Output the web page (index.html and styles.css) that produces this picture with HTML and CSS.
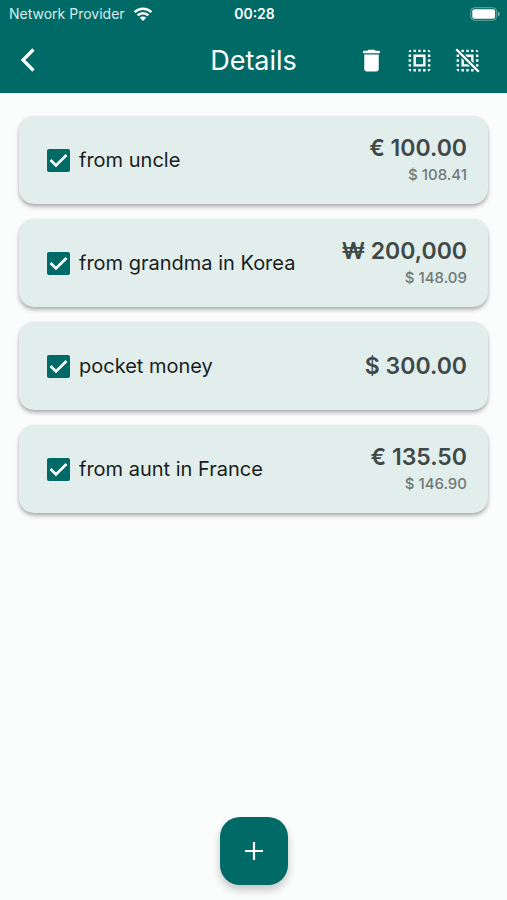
FILE: index.html
```html
<!DOCTYPE html>
<html lang="en">
<head>
<meta charset="utf-8">
<meta name="viewport" content="width=device-width, initial-scale=1">
<title>Details</title>
<link rel="stylesheet" href="styles.css">
</head>
<body>
<header class="top">
  <div class="status">
    <span class="carrier">Network Provider
      <svg class="wifi" viewBox="0 0 20 16" aria-hidden="true"><path d="M1.6 6.2a12 12 0 0 1 16.8 0M4.6 9.4a7.7 7.7 0 0 1 10.8 0" fill="none" stroke="currentColor" stroke-width="2.5"/><path d="M6.8 11.7a4.6 4.6 0 0 1 6.4 0L10 15z" fill="currentColor"/></svg>
    </span>
    <span class="clock">00:28</span>
    <svg class="battery" viewBox="0 0 30 14" aria-hidden="true"><rect x=".7" y=".7" width="26" height="12.6" rx="4" fill="none" stroke="#fff" stroke-opacity=".4"/><rect x="2.3" y="2.3" width="22.8" height="9.4" rx="2" fill="#fff"/><path d="M28 4.6c2.2.9 2.2 3.9 0 4.8z" fill="#fff" fill-opacity=".5"/></svg>
  </div>
  <div class="bar">
    <button class="icon-button back" aria-label="Back"><svg class="back-icon" viewBox="0 0 16 26"><path d="M13.5 2.5 3 13l10.500 10.500" fill="none" stroke="currentColor" stroke-width="3.200"/></svg></button>
    <h1 class="title">Details</h1>
    <div class="actions">
      <button class="icon-button" aria-label="Delete"><svg class="icon" viewBox="0 0 24 24"><path d="M6 19c0 1.100.9 2 2 2h8c1.100 0 2-.9 2-2V7H6v12zM18.500 4h-3l-.71-.71c-.18-.18-.44-.29-.7-.29H9.910c-.26 0-.52.110-.7.290L8.500 4h-3c-.3 0-.5.200-.5.500V6h14V4.500c0-.3-.2-.5-.5-.5z"/></svg></button>
      <button class="icon-button" aria-label="Select all"><svg class="icon" viewBox="0 0 24 24"><path d="M3 5h2V3c-1.100 0-2 .9-2 2zm0 8h2v-2H3v2zm4 8h2v-2H7v2zM3 9h2V7H3v2zm10-6h-2v2h2V3zm6 0v2h2c0-1.100-.9-2-2-2zM5 21v-2H3c0 1.100.9 2 2 2zm-2-4h2v-2H3v2zM9 3H7v2h2V3zm2 18h2v-2h-2v2zm8-8h2v-2h-2v2zm0 8c1.100 0 2-.9 2-2h-2v2zm0-12h2V7h-2v2zm0 8h2v-2h-2v2zm-4 4h2v-2h-2v2zm0-16h2V3h-2v2zM7 17h10V7H7v10zm2-8h6v6H9V9z"/></svg></button>
      <button class="icon-button" aria-label="Deselect all"><svg class="icon" viewBox="0 0 24 24"><path d="M3 13h2v-2H3zM7 21h2v-2H7zM3 9h2V7H3zM11 5h2V3h-2zM19 3v2h2c0-1.100-.9-2-2-2zM5 21v-2H3c0 1.100.9 2 2 2zM3 17h2v-2H3zM7 3h2v2H7zM11 21h2v-2h-2zM19 13h2v-2h-2zM19 9h2V7h-2zM19 15h2v2h-2zM15 21h2v-2h-2zM15 5h2V3h-2zM9.830 7H17v7.170l-2-2V9h-3.170zM7 9.830V17h7.170l-2-2H9v-3.170zM3.410 2 2 3.410 20.590 22 22 20.590z"/></svg></button>
    </div>
  </div>
</header>
<main class="content">
  <ul class="list">
    <li class="card">
      <label class="entry"><input class="check" type="checkbox" checked><span>from uncle</span></label>
      <div class="amounts"><strong class="amount">€ 100.00</strong><span class="converted">$ 108.41</span></div>
    </li>
    <li class="card">
      <label class="entry"><input class="check" type="checkbox" checked><span>from grandma in Korea</span></label>
      <div class="amounts"><strong class="amount">₩ 200,000</strong><span class="converted">$ 148.09</span></div>
    </li>
    <li class="card">
      <label class="entry"><input class="check" type="checkbox" checked><span>pocket money</span></label>
      <div class="amounts"><strong class="amount">$ 300.00</strong></div>
    </li>
    <li class="card">
      <label class="entry"><input class="check" type="checkbox" checked><span>from aunt in France</span></label>
      <div class="amounts"><strong class="amount">€ 135.50</strong><span class="converted">$ 146.90</span></div>
    </li>
  </ul>
</main>
<footer class="footer">
  <button class="add" aria-label="Add entry"><svg class="plus" viewBox="0 0 18 18"><path d="M9 0v18M0 9h18" stroke="currentColor" stroke-width="2.200"/></svg></button>
</footer>
</body>
</html>
```

FILE: styles.css
```css
* { box-sizing: border-box; }

body {
  margin: 0;
  min-height: 100vh;
  display: flex;
  flex-direction: column;
  background: #fbfdfc;
  color: #191c1c;
  font-family: Inter, "Noto Sans", sans-serif;
}

button {
  padding: 0;
  border: 0;
  background: none;
  color: inherit;
  font: inherit;
}

svg { display: block; }

.top {
  background: #006a67;
  color: #fff;
}

.status {
  display: grid;
  grid-template-columns: 1fr auto 1fr;
  align-items: center;
  height: 27px;
  padding: 0 7px 0 9px;
  font-size: 14px;
}

.carrier {
  display: flex;
  align-items: center;
  gap: 8px;
  color: #dcebea;
  white-space: nowrap;
}

.wifi { width: 20px; height: 16px; color: #fff; }
.clock { font-weight: 600; }
.battery { width: 30px; height: 14px; justify-self: end; }

.bar {
  display: grid;
  grid-template-columns: 1fr auto 1fr;
  align-items: center;
  height: 66px;
  padding: 0 16px;
}

.icon-button {
  display: grid;
  place-items: center;
  width: 48px;
  height: 48px;
}

.back { margin-left: -12px; }
.back-icon { width: 16px; height: 26px; }
.icon { width: 29px; height: 29px; fill: currentColor; }

.title {
  margin: 0;
  font-size: 27px;
  font-weight: 400;
}

.actions {
  display: flex;
  justify-content: flex-end;
}

.content {
  flex: 1;
  padding: 23px 19px;
}

.list {
  display: grid;
  gap: 15px;
  margin: 0;
  padding: 0;
  list-style: none;
}

.card {
  display: flex;
  align-items: center;
  justify-content: space-between;
  min-height: 88px;
  padding: 12px 21px 12px 28px;
  border-radius: 15px;
  background: #e2eeec;
  box-shadow: 0 3px 4px rgba(0, 0, 0, .26), 0 1px 3px rgba(0, 0, 0, .1);
}

.entry {
  display: flex;
  align-items: center;
  gap: 9px;
  font-size: 20px;
}

.check {
  appearance: none;
  width: 23px;
  height: 23px;
  margin: 0;
  border-radius: 2px;
  background: #006a67 url("data:image/svg+xml,%3Csvg xmlns='http://www.w3.org/2000/svg' viewBox='0 0 23 23'%3E%3Cpath d='M3.500 11 9 16.500 19.500 6' fill='none' stroke='white' stroke-width='2.600'/%3E%3C/svg%3E");
}

.amounts {
  display: flex;
  flex-direction: column;
  align-items: flex-end;
  gap: 3px;
  color: #3f4948;
}

.amount {
  font-size: 23px;
  font-weight: 600;
  line-height: 26px;
}

.converted {
  color: #6f7978;
  font-size: 15px;
  font-weight: 500;
  line-height: 22px;
}

.footer {
  display: flex;
  justify-content: center;
  padding: 0 0 15px;
}

.add {
  display: grid;
  place-items: center;
  width: 68px;
  height: 68px;
  border-radius: 20px;
  background: #006a67;
  color: #fff;
  box-shadow: 0 5px 8px rgba(0, 0, 0, .22);
}

.plus { width: 18px; height: 18px; }
```
